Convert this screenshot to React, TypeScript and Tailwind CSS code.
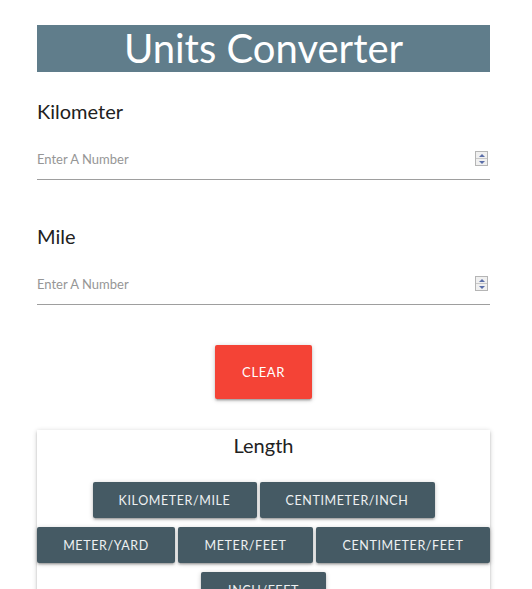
import { useState } from 'react'

const font = { fontFamily: 'Lato, "Noto Sans", sans-serif' }

const rows = [
  [
    { label: 'Kilometer/Mile', w: 'w-[164px]' },
    { label: 'Centimeter/Inch', w: 'w-[175px]' },
  ],
  [
    { label: 'Meter/Yard', w: 'w-[138px]' },
    { label: 'Meter/Feet', w: 'w-[135px]' },
    { label: 'Centimeter/Feet', w: 'w-[174px]' },
  ],
  [{ label: 'Inch/Feet', w: 'w-[125px]' }],
]

function Spinner() {
  return (
    <div className="flex h-[15px] w-[13px] flex-col border border-[#b5b5b5] bg-[#f0f0f0]">
      <div className="flex flex-1 items-center justify-center border-b border-[#c8c8c8]">
        <span className="h-0 w-0 border-x-[3px] border-b-[3px] border-x-transparent border-b-[#5b6ea8]" />
      </div>
      <div className="flex flex-1 items-center justify-center">
        <span className="h-0 w-0 border-x-[3px] border-t-[3px] border-x-transparent border-t-[#5b6ea8]" />
      </div>
    </div>
  )
}

function Field({ label, value, onChange, first }: { label: string; value: string; onChange: (v: string) => void; first?: boolean }) {
  return (
    <div className={first ? 'mt-[27px]' : 'mt-[44px]'}>
      <div className="text-[20px] leading-[24px] text-[#212121]">{label}</div>
      <div className="mt-[15px] flex h-[42px] items-center border-b border-[#9e9e9e]">
        <input
          type="text"
          value={value}
          onChange={(e) => onChange(e.target.value)}
          placeholder="Enter A Number"
          className="h-full flex-1 bg-transparent text-[13px] text-[#212121] outline-none placeholder:text-[#969696]"
          style={font}
        />
        <div className="mr-[2px]">
          <Spinner />
        </div>
      </div>
    </div>
  )
}

const shadow = 'shadow-[0_2px_2px_0_rgba(0,0,0,0.14),0_3px_1px_-2px_rgba(0,0,0,0.12),0_1px_5px_0_rgba(0,0,0,0.2)]'

export default function App() {
  const [km, setKm] = useState('')
  const [mi, setMi] = useState('')

  return (
    <div className="min-h-[589px] bg-white pt-[25px]" style={font}>
      <div className="ml-[37px] w-[453px]">
        <h1 className="h-[47px] bg-[#607d8b] text-center text-[40px] leading-[47px] text-white">Units Converter</h1>

        <Field label="Kilometer" value={km} onChange={setKm} first />
        <Field label="Mile" value={mi} onChange={setMi} />

        <div className="mt-[40px] flex justify-center">
          <button
            onClick={() => {
              setKm('')
              setMi('')
            }}
            className={`h-[54px] w-[97px] rounded-[2px] bg-[#f44336] pt-[1px] text-[13px] uppercase tracking-[0.6px] text-white ${shadow}`}
          >
            Clear
          </button>
        </div>

        <div className={`mt-[31px] bg-white pb-4 pt-[3px] ${shadow}`}>
          <div className="text-center text-[20px] leading-[24px] text-[#212121]">Length</div>
          <div className="mt-[25px] flex flex-col gap-[9px]">
            {rows.map((row, i) => (
              <div key={i} className="flex justify-center gap-[3px]">
                {row.map((b) => (
                  <button
                    key={b.label}
                    className={`${b.w} h-[36px] rounded-[2px] bg-[#455a64] pt-[2px] text-[12.5px] uppercase tracking-[0.6px] text-[#eef1f2] ${shadow}`}
                  >
                    {b.label}
                  </button>
                ))}
              </div>
            ))}
          </div>
        </div>
      </div>
    </div>
  )
}
